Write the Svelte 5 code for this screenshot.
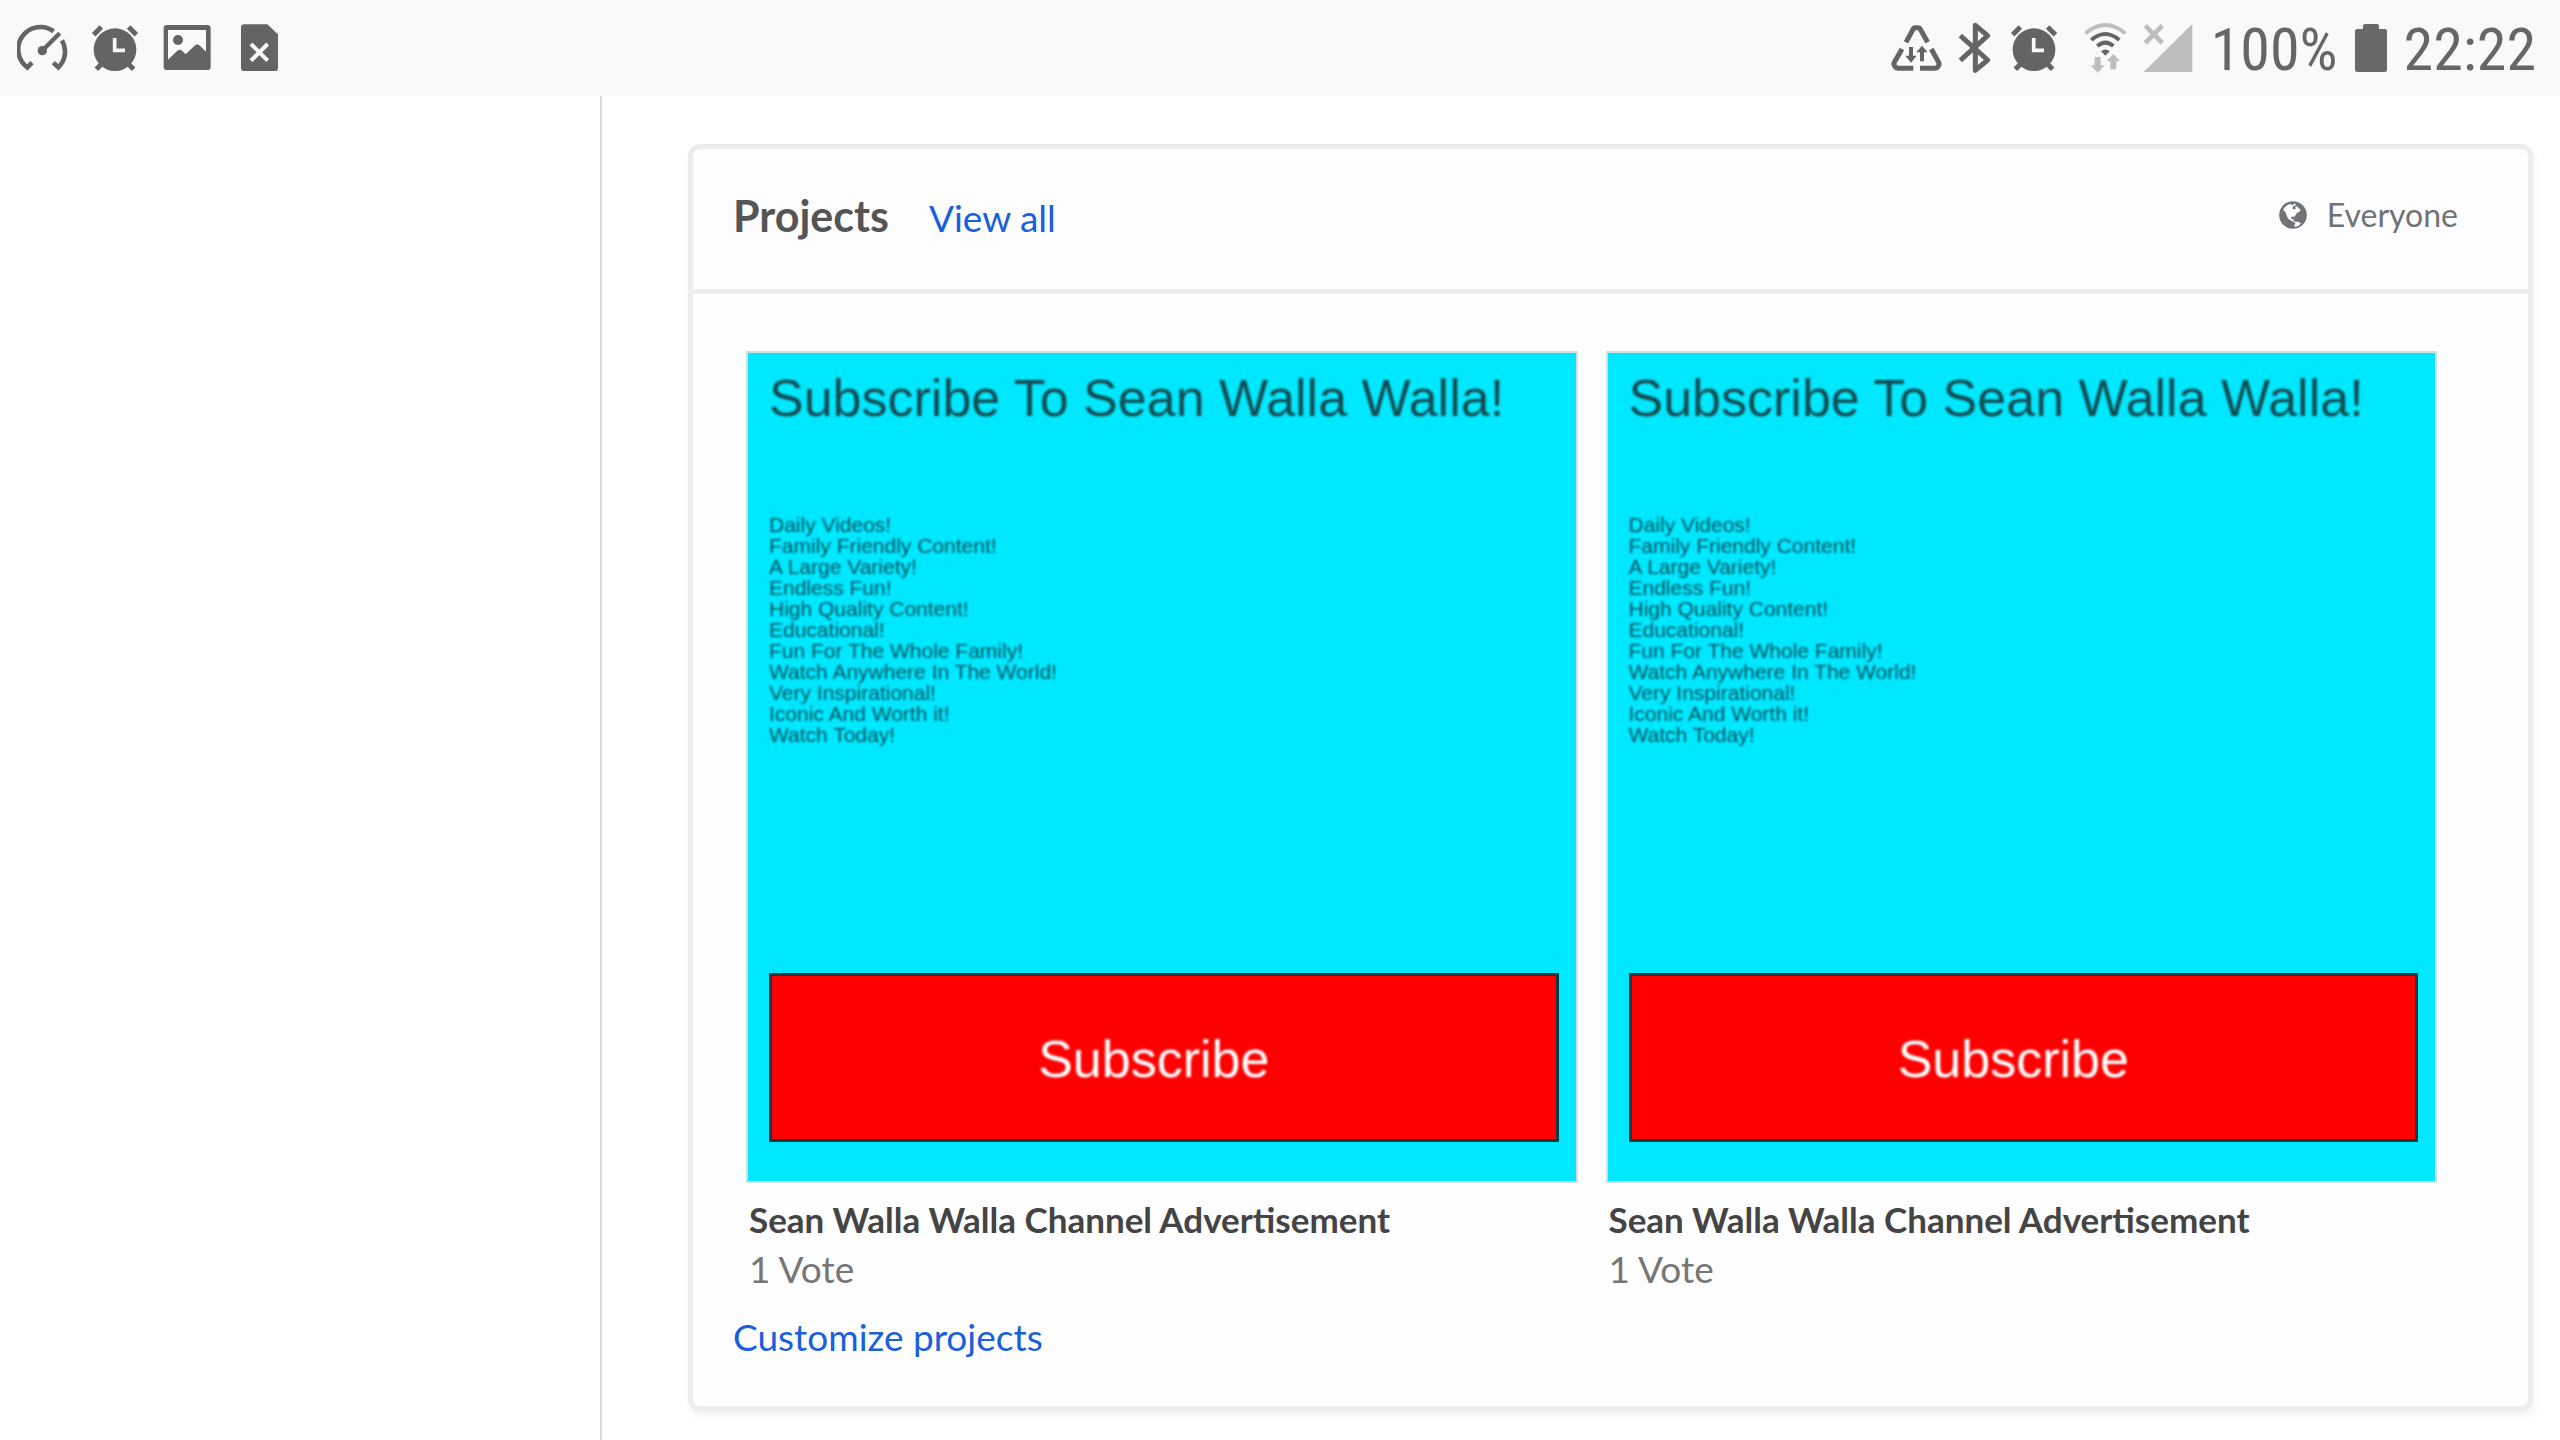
<script>
  const lines = [
    'Daily Videos!',
    'Family Friendly Content!',
    'A Large Variety!',
    'Endless Fun!',
    'High Quality Content!',
    'Educational!',
    'Fun For The Whole Family!',
    'Watch Anywhere In The World!',
    'Very Inspirational!',
    'Iconic And Worth it!',
    'Watch Today!'
  ];
  const projects = [
    { id: 1, title: 'Sean Walla Walla Channel Advertisement', votes: '1 Vote' },
    { id: 2, title: 'Sean Walla Walla Channel Advertisement', votes: '1 Vote' }
  ];
</script>

{#snippet alarm()}
  <svg class="icon" viewBox="267 66 156 156" aria-label="Alarm">
    <circle cx="345" cy="149" r="64" />
    <path class="line" stroke-width="15" d="M281 104 L304 81 M409 104 L386 81 M289 208 L304 193 M401 208 L386 193" />
    <path class="cut" stroke-width="11" d="M344 114 V151 H375" />
  </svg>
{/snippet}

<div class="page">
  <header class="status">
    <div class="group notifications">
      <svg class="icon" viewBox="51 66 156 156" aria-label="Data usage">
        <path class="line" stroke-width="14" d="M161 94 A66 66 0 0 0 82 202 L96 188 M186 121 A66 66 0 0 1 175 202 L160 188" />
        <path class="line" stroke-width="13" d="M128 151 L179 100" />
        <circle cx="127" cy="152" r="14" />
      </svg>
      {@render alarm()}
      <svg class="icon" viewBox="483 66 156 156" aria-label="Screenshot">
        <path fill-rule="evenodd" d="M501 75 H622 Q632 75 632 85 V200 Q632 210 622 210 H501 Q491 210 491 200 V85 Q491 75 501 75 Z M504 90 V179 L532 152 Q539 146 546 152 L557 163 L584 137 Q592 130 600 137 L618 155 V90 Z" />
        <circle cx="534" cy="120" r="15" />
      </svg>
      <svg class="icon" viewBox="699 66 156 156" aria-label="SIM card missing">
        <path d="M733 73 H802 L834 103 V203 Q834 213 824 213 H733 Q723 213 723 203 V83 Q723 73 733 73 Z" />
        <path class="cut" stroke-width="12" d="M753 132 L803 182 M803 132 L753 182" />
      </svg>
    </div>

    <div class="group system">
      <svg class="icon" viewBox="60 66 156 156" aria-label="Data saver">
        <path class="line" stroke-width="15" stroke-linejoin="round" d="M108 127 L129 88 Q131 83 136 83 H144 Q149 83 151 88 L173 127 M96 147 L73 187 Q70 193 74 198 Q78 205 85 205 H130 M184 147 L206 187 Q209 193 205 198 Q201 205 194 205 H150" />
        <path d="M117 141 H129 V167 H140 L123 188 L106 167 H117 Z M150 184 H162 V157 H173 L156 137 L139 157 H150 Z" />
      </svg>
      <svg class="icon" viewBox="237 66 156 156" aria-label="Bluetooth">
        <path class="line" stroke-width="15" stroke-linejoin="round" d="M271 107 L353 180 L316 211 V76 L353 107 L271 181" />
      </svg>
      {@render alarm()}
    </div>

    <div class="group network">
      <svg class="icon" viewBox="630 66 156 156" aria-label="Wi-Fi">
        <path class="line faint-line" stroke-width="11" d="M646 100 Q706 50 766 100" />
        <path class="line" stroke-width="12" d="M664 120 Q706 84 748 120 M682 138 Q706 118 730 138" />
        <path d="M693 154 Q706 143 719 154 L706 167 Z" />
        <path class="faint" d="M674 171 H692 V196 H704 L683 218 L662 196 H674 Z M721 208 H739 V183 H750 L730 162 L710 183 H721 Z" />
      </svg>
      <svg class="icon" viewBox="819 66 156 156" aria-label="No signal">
        <path class="faint" d="M967 72 V216 H821 Z" />
        <path class="line faint-line" stroke-width="14" d="M826 77 L877 129 M877 77 L826 129" />
      </svg>
    </div>

    <span class="reading">100%</span>
    <svg class="battery" viewBox="495 66 96 156" aria-label="Battery full">
      <path d="M525 72 H561 Q567 72 567 78 V87 H584 Q591 87 591 94 V209 Q591 216 584 216 H502 Q495 216 495 209 V94 Q495 87 502 87 H519 V78 Q519 72 525 72 Z" />
    </svg>
    <time class="reading" datetime="22:22">22:22</time>
  </header>

  <div class="body">
    <aside class="sidebar"></aside>
    <main class="content">
      <section class="card">
        <div class="card-head">
          <div class="heading">
            <h2>Projects</h2>
            <a href="#all">View all</a>
          </div>
          <div class="audience">
            <svg class="globe" viewBox="239 211 85 85" aria-hidden="true">
              <circle cx="281.500" cy="253.500" r="42" />
              <path class="land" d="M251 238 L257 229 L267 222 L277 221 L279 225 L285 219 L292 221 L288 225 L282 227 L279 233 L285 237 L290 234 L288 228 L295 228 L299 234 L305 236 L301 244 L294 247 L289 254 L286 259 L280 258 L275 262 L278 267 L284 264 L283 270 L288 274 L297 274 L306 279 L299 286 L287 290 L286 284 L289 278 L281 273 L272 269 L266 263 L262 254 L258 244 Z" />
            </svg>
            <span>Everyone</span>
          </div>
        </div>

        <div class="card-body">
          <ul class="projects">
            {#each projects as project (project.id)}
              <li>
                <div class="poster">
                  <h3>Subscribe To Sean Walla Walla!</h3>
                  <div class="pitch">
                    {#each lines as line}
                      <p>{line}</p>
                    {/each}
                  </div>
                  <button type="button"><span>Subscribe</span></button>
                </div>
                <h4>{project.title}</h4>
                <p class="votes">{project.votes}</p>
              </li>
            {/each}
          </ul>
          <a class="customize" href="#customize">Customize projects</a>
        </div>
      </section>
    </main>
  </div>
</div>

<style>
  :global(body) {
    margin: 0;
    background: #fff;
  }
  h2, h3, h4, p, ul {
    margin: 0;
    padding: 0;
  }
  a {
    color: #1a5fdb;
    text-decoration: none;
  }
  .page {
    min-height: 100vh;
    display: flex;
    flex-direction: column;
    font-family: Lato, "Liberation Sans", sans-serif;
  }

  .status {
    display: flex;
    align-items: center;
    height: 96px;
    box-sizing: border-box;
    padding: 0 24px 0 17px;
    background: #f9f9f9;
    color: #666;
  }
  .group {
    display: flex;
  }
  .notifications {
    gap: 20px;
    margin-right: auto;
  }
  .system {
    gap: 7px;
    margin-right: 20px;
  }
  .network {
    gap: 11px;
    margin-right: 16px;
  }
  .icon {
    width: 52px;
    height: 52px;
    fill: #646464;
  }
  .line {
    fill: none;
    stroke: #646464;
  }
  .cut {
    fill: none;
    stroke: #f9f9f9;
  }
  .faint {
    fill: #bdbdbd;
  }
  .faint-line {
    stroke: #bdbdbd;
  }
  .battery {
    width: 32px;
    height: 52px;
    margin: 0 17px;
    fill: #696969;
  }
  .reading {
    padding-top: 4px;
    font-family: "Roboto Condensed", Roboto, sans-serif;
    font-size: 60px;
    line-height: 72px;
  }

  .body {
    flex: 1;
    display: flex;
  }
  .sidebar {
    flex: 0 0 600px;
    border-right: 2px solid #dadada;
  }
  .content {
    flex: 1;
    min-width: 0;
    padding: 48px 27px 28px 86px;
  }
  .card {
    border: 5px solid #ededed;
    border-radius: 12px;
    background: #fefefe;
    box-shadow: 2px 5px 8px rgba(0, 0, 0, 0.05);
  }
  .card-head {
    display: flex;
    align-items: center;
    justify-content: space-between;
    height: 140px;
    padding: 0 70px 0 40px;
    border-bottom: 5px solid #ededed;
    background: #fdfdfd;
    border-radius: 7px 7px 0 0;
  }
  .heading {
    display: flex;
    align-items: baseline;
    gap: 40px;
    padding-bottom: 4px;
    font-size: 37px;
    line-height: 52px;
  }
  h2 {
    font-size: 43px;
    font-weight: 700;
    color: #555;
  }
  .audience {
    display: flex;
    align-items: center;
    gap: 20px;
    padding-bottom: 8px;
    font-size: 32px;
    line-height: 40px;
    color: #6f7277;
  }
  .globe {
    width: 28px;
    height: 28px;
    fill: #6f7277;
  }
  .land {
    fill: #fdfdfd;
  }

  .card-body {
    padding: 57px 40px 44px;
  }
  .projects {
    display: grid;
    grid-template-columns: 1fr 1fr;
    gap: 28px;
    padding: 0 51px 0 13px;
    list-style: none;
  }
  .poster {
    aspect-ratio: 1;
    box-sizing: border-box;
    display: flex;
    flex-direction: column;
    padding: 15px 17px 39px 21px;
    border: 2px solid #cfe0e2;
    background: #00e8ff;
    font-family: "Liberation Sans", Arial, sans-serif;
    color: #144c52;
  }
  h3 {
    font-size: 52px;
    font-weight: 400;
    line-height: 60px;
    white-space: nowrap;
    filter: blur(1px);
  }
  .pitch {
    margin-top: 86px;
    font-size: 21px;
    line-height: 21px;
    color: #06525e;
    filter: blur(1px);
  }
  .poster button {
    width: 100%;
    height: 169px;
    margin-top: auto;
    padding: 4px 20px 0 0;
    border: 3px solid #123c42;
    background: #f00;
    color: #fff;
    font: 52px "Liberation Sans", Arial, sans-serif;
  }
  .poster button span {
    filter: blur(1px);
  }
  h4 {
    margin: 11px 0 0 3px;
    font-size: 35px;
    line-height: 50px;
    font-weight: 700;
    color: #444;
  }
  .votes {
    margin-left: 3px;
    font-size: 37px;
    line-height: 50px;
    color: #767676;
  }
  .customize {
    display: block;
    margin-top: 18px;
    font-size: 37px;
    line-height: 50px;
  }
</style>
